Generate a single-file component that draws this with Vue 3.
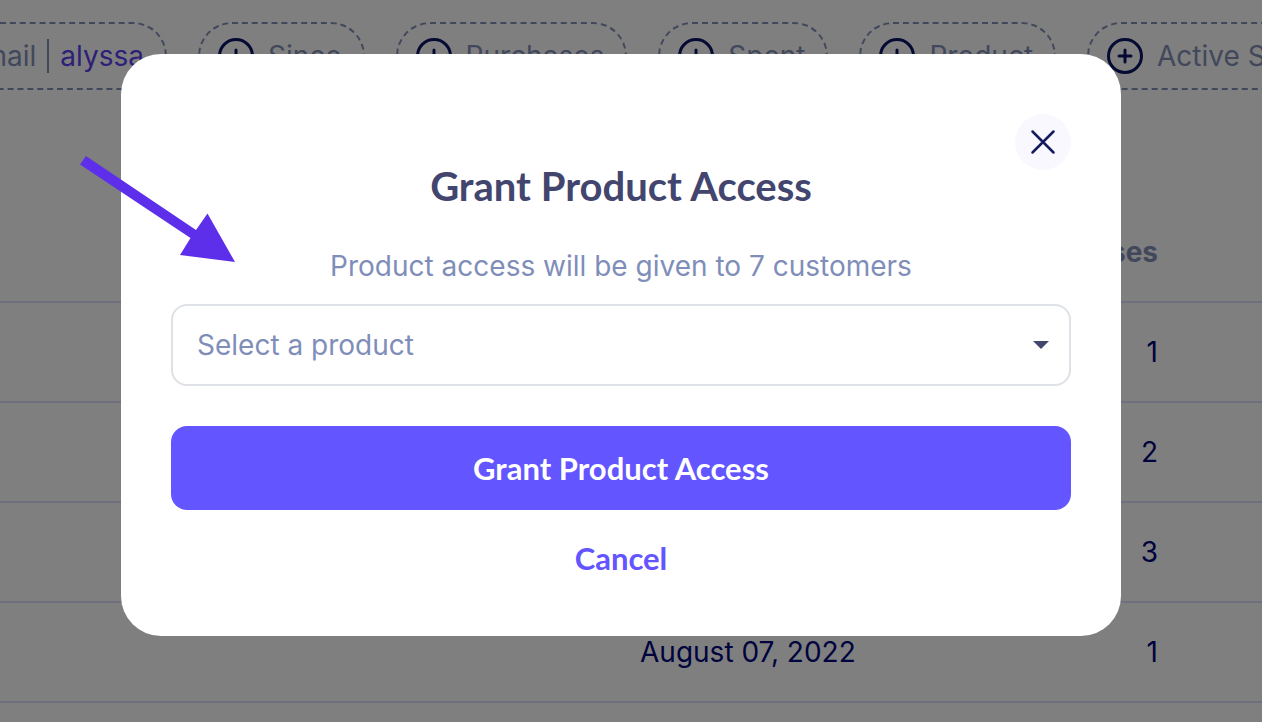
<script setup>
import { ref } from 'vue'

const filters = ['Since', 'Purchases', 'Spent', 'Product', 'Active Subscription']
const rows = [
  { date: '', purchases: 1 },
  { date: '', purchases: 2 },
  { date: '', purchases: 3 },
  { date: 'August 07, 2022', purchases: 1 },
]
const product = ref('')
</script>

<template>
  <div class="screen">
    <main class="page">
      <div class="filters">
        <button class="chip chip-active" type="button">
          <span>Email</span><span class="divider"></span><span class="value">alyssa</span>
        </button>
        <button v-for="name in filters" :key="name" class="chip" type="button">
          <svg class="plus" viewBox="0 0 36 36" aria-hidden="true">
            <circle cx="18" cy="18" r="16.5" />
            <path d="M18 12v12M12 18h12" />
          </svg>
          <span>{{ name }}</span>
        </button>
      </div>

      <table class="customers">
        <thead>
          <tr>
            <th class="lead"></th>
            <th></th>
            <th class="count">Purchases</th>
          </tr>
        </thead>
        <tbody>
          <tr v-for="(row, i) in rows" :key="i">
            <td class="lead"></td>
            <td>{{ row.date }}</td>
            <td class="count">{{ row.purchases }}</td>
          </tr>
        </tbody>
      </table>
    </main>

    <div class="overlay">
      <section class="modal" role="dialog" aria-modal="true" aria-labelledby="modal-title">
        <button class="close" type="button" aria-label="Close">
          <svg viewBox="0 0 56 56" aria-hidden="true">
            <path d="M17.5 17.500l21 21M38.500 17.500l-21 21" />
          </svg>
        </button>
        <h1 id="modal-title">Grant Product Access</h1>
        <label class="note" for="product">Product access will be given to 7 customers</label>
        <div class="field">
          <select id="product" v-model="product">
            <option value="">Select a product</option>
          </select>
          <svg class="caret" viewBox="0 0 16 8" aria-hidden="true"><path d="M0 0h16L8 8z" /></svg>
        </div>
        <button class="submit" type="button">Grant Product Access</button>
        <button class="cancel" type="button">Cancel</button>
      </section>
    </div>

    <svg class="arrow" viewBox="0 0 156 107" aria-hidden="true">
      <path d="M6 0 116 74 127.500 57.500 155 106 100 99 110.500 82 0 8.500z" />
    </svg>
  </div>
</template>

<style>
body {
  background: #fff;
}
</style>

<style scoped>
.screen {
  position: relative;
  height: 100vh;
  overflow: hidden;
  font-family: Inter, "Liberation Sans", sans-serif;
  font-size: 28px;
  line-height: 36px;
}

button,
select {
  box-sizing: border-box;
  margin: 0;
  padding: 0;
  border: 0;
  background: none;
  font: inherit;
  cursor: pointer;
}

.filters {
  display: flex;
  gap: 31px;
  padding-top: 22px;
}

.chip {
  display: flex;
  flex: none;
  align-items: center;
  gap: 14px;
  height: 68px;
  padding: 0 21px 0 18px;
  border: 2px dashed #8391b8;
  border-radius: 34px;
  color: #8391b8;
  white-space: nowrap;
}

.chip-active {
  justify-content: flex-end;
  gap: 11px;
  width: 167px;
  padding-left: 0;
  border-left: 0;
  border-top-left-radius: 0;
  border-bottom-left-radius: 0;
  overflow: hidden;
}

.divider {
  flex: none;
  width: 2px;
  height: 34px;
  background: #8391b8;
}

.value {
  color: #5b42ee;
}

.plus {
  width: 36px;
  height: 36px;
  fill: none;
  stroke: #0a1466;
  stroke-width: 3;
  stroke-linecap: round;
}

.customers {
  width: 100%;
  margin-top: 113px;
  border-collapse: separate;
  border-spacing: 0;
  color: #00067a;
}

.customers th,
.customers td {
  box-sizing: border-box;
  height: 100px;
  padding: 0;
  border-bottom: 2px solid #dce0fa;
  text-align: left;
}

.customers th {
  color: #8391b8;
  font-weight: 700;
}

.customers .lead {
  width: 640px;
}

.customers .count {
  padding-right: 104px;
  text-align: right;
}

.overlay {
  position: absolute;
  inset: 0;
  display: flex;
  align-items: flex-start;
  justify-content: center;
  padding: 54px 20px 0 0;
  background: rgba(0, 0, 0, 0.5);
}

.modal {
  box-sizing: border-box;
  display: flex;
  flex-direction: column;
  width: 1000px;
  max-width: 100%;
  padding: 60px 50px 56px;
  border-radius: 40px;
  background: #fff;
  text-align: center;
}

.close {
  align-self: flex-end;
  width: 56px;
  height: 56px;
  border-radius: 50%;
  background: #f9f8ff;
}

.close svg {
  display: block;
  fill: none;
  stroke: #141b5f;
  stroke-width: 2.5;
  stroke-linecap: round;
}

h1 {
  margin: -8px 0 0;
  color: #42466f;
  font-family: Lato, "Open Sans", sans-serif;
  font-size: 40px;
  font-weight: 700;
  line-height: 48px;
}

.note {
  margin-top: 38px;
  color: #7f8eb9;
}

.field {
  display: grid;
  align-items: center;
  margin-top: 20px;
}

.field > * {
  grid-area: 1 / 1;
}

.field select {
  width: 100%;
  height: 82px;
  padding: 0 24px;
  border: 2px solid #dee2e6;
  border-radius: 16px;
  appearance: none;
  color: #7f8eb9;
}

.caret {
  justify-self: end;
  width: 16px;
  height: 8px;
  margin-right: 22px;
  fill: #42466f;
  pointer-events: none;
}

.submit,
.cancel {
  font-family: Lato, "Open Sans", sans-serif;
  font-size: 31px;
  font-weight: 700;
}

.submit {
  height: 84px;
  margin-top: 40px;
  border-radius: 16px;
  background: #6355ff;
  color: #fff;
}

.cancel {
  align-self: center;
  height: 44px;
  margin-top: 26px;
  color: #6355ff;
}

.arrow {
  position: absolute;
  top: 156px;
  left: 80px;
  width: 156px;
  height: 107px;
  fill: #5e2fea;
  pointer-events: none;
}
</style>
